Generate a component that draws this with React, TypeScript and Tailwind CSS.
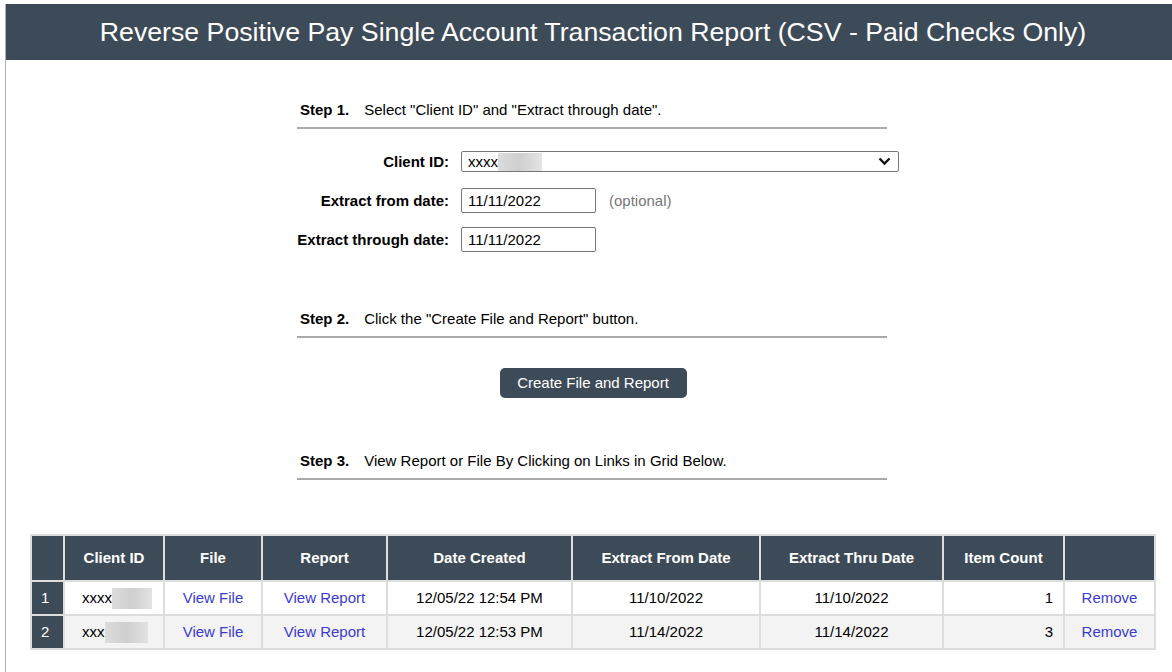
import React from "react";

const font = { fontFamily: '"Liberation Sans", Arial, sans-serif' };

function StepHeader({ n, text }: { n: number; text: string }) {
  return (
    <div className="border-b-2 border-[#aaaaaa] pb-[8px] pl-[3px] text-[15px] leading-[18px] text-black">
      <span className="font-bold">Step {n}.</span>
      <span className="ml-[15px]">{text}</span>
    </div>
  );
}

const rows = [
  { n: 1, created: "12/05/22 12:54 PM", from: "11/10/2022", thru: "11/10/2022", count: 1, bg: "bg-white", xs: "xxxx" },
  { n: 2, created: "12/05/22 12:53 PM", from: "11/14/2022", thru: "11/14/2022", count: 3, bg: "bg-[#f3f3f3]", xs: "xxx" },
];

export default function App() {
  return (
    <div className="bg-white w-[1172px] h-[672px] overflow-hidden pt-[4px]" style={font}>
      <div className="ml-[5px] border-l border-[#b0b0b0] h-[668px]">
        <div className="h-[56px] bg-[#3d4b58] flex items-center justify-center text-white text-[26.7px] pl-[8px]">
          Reverse Positive Pay Single Account Transaction Report (CSV - Paid Checks Only)
        </div>

        <div className="ml-[291px] w-[590px] pt-[41px]">
          <StepHeader n={1} text={'Select "Client ID" and "Extract through date".'} />

          <div className="mt-[22px] flex items-center text-[15px] leading-[18px]">
            <div className="w-[152px] shrink-0 text-right font-bold">Client ID:</div>
            <div className="ml-[12px] w-[438px] shrink-0 h-[21px] border border-[#767676] rounded-[2px] flex items-center pl-[6px] pr-[7px]">
              <span>xxxx</span>
              <span className="inline-block w-[44px] h-[18px] bg-gradient-to-r from-[#dcdcdc] via-[#cfcfcf] to-[#e4e4e4]" />
              <span className="flex-1" />
              <svg width="13" height="9" viewBox="0 0 13 9">
                <path d="M1.5 1.5 L6.5 6.5 L11.5 1.5" fill="none" stroke="#111" strokeWidth="2.4" />
              </svg>
            </div>
          </div>

          <div className="mt-[16px] flex items-center text-[15px] leading-[18px]">
            <div className="w-[152px] shrink-0 text-right font-bold">Extract from date:</div>
            <div className="ml-[12px] w-[135px] shrink-0 h-[25px] border border-[#767676] rounded-[2px] flex items-center pl-[6px]">
              11/11/2022
            </div>
            <span className="ml-[13px] text-[#777777]">(optional)</span>
          </div>

          <div className="mt-[14px] flex items-center text-[15px] leading-[18px]">
            <div className="w-[152px] shrink-0 text-right font-bold">Extract through date:</div>
            <div className="ml-[12px] w-[135px] shrink-0 h-[25px] border border-[#767676] rounded-[2px] flex items-center pl-[6px]">
              11/11/2022
            </div>
          </div>

          <div className="mt-[58px]">
            <StepHeader n={2} text={'Click the "Create File and Report" button.'} />
          </div>

          <div className="mt-[30px] flex justify-center">
            <button className="ml-[2px] w-[187px] h-[30px] rounded-[5px] bg-[#3d4b58] text-white text-[15px]">
              Create File and Report
            </button>
          </div>

          <div className="mt-[54px]">
            <StepHeader n={3} text="View Report or File By Clicking on Links in Grid Below." />
          </div>
        </div>

        <div className="ml-[24px] mt-[54px] w-[1124px]">
          <table className="border-collapse text-[15px] table-fixed w-[1124px]">
            <colgroup>
              <col style={{ width: 33 }} />
              <col style={{ width: 100 }} />
              <col style={{ width: 98 }} />
              <col style={{ width: 125 }} />
              <col style={{ width: 185 }} />
              <col style={{ width: 188 }} />
              <col style={{ width: 183 }} />
              <col style={{ width: 121 }} />
              <col style={{ width: 91 }} />
            </colgroup>
            <thead>
              <tr className="h-[46px] bg-[#3d4b58] text-white font-bold">
                <th className="border-2 border-[#dddddd]"></th>
                <th className="border-2 border-[#dddddd]">Client ID</th>
                <th className="border-2 border-[#dddddd]">File</th>
                <th className="border-2 border-[#dddddd]">Report</th>
                <th className="border-2 border-[#dddddd]">Date Created</th>
                <th className="border-2 border-[#dddddd]">Extract From Date</th>
                <th className="border-2 border-[#dddddd]">Extract Thru Date</th>
                <th className="border-2 border-[#dddddd]">Item Count</th>
                <th className="border-2 border-[#dddddd]"></th>
              </tr>
            </thead>
            <tbody>
              {rows.map((r) => (
                <tr key={r.n} className={`h-[34px] ${r.bg}`}>
                  <td className="border-2 border-[#dddddd] bg-[#3d4b58] text-white pl-[9px] pt-[1px]">{r.n}</td>
                  <td className="border-2 border-[#dddddd] pl-[17px] pt-[1px]">
                    <span className="inline-flex items-center">
                      <span>{r.xs}</span>
                      <span
                        className="inline-block h-[21px] bg-gradient-to-r from-[#dcdcdc] via-[#cfcfcf] to-[#e2e2e2]"
                        style={{ width: r.n === 1 ? 40 : 43 }}
                      />
                    </span>
                  </td>
                  <td className="border-2 border-[#dddddd] text-center text-[#3b3bd0] pt-[1px]">View File</td>
                  <td className="border-2 border-[#dddddd] text-center text-[#3b3bd0] pt-[1px]">View Report</td>
                  <td className="border-2 border-[#dddddd] text-center pt-[1px]">{r.created}</td>
                  <td className="border-2 border-[#dddddd] text-center pt-[1px]">{r.from}</td>
                  <td className="border-2 border-[#dddddd] text-center pt-[1px]">{r.thru}</td>
                  <td className="border-2 border-[#dddddd] text-right pr-[10px] pt-[1px]">{r.count}</td>
                  <td className="border-2 border-[#dddddd] text-center text-[#3b3bd0] pt-[1px]">Remove</td>
                </tr>
              ))}
            </tbody>
          </table>
        </div>
      </div>
    </div>
  );
}
